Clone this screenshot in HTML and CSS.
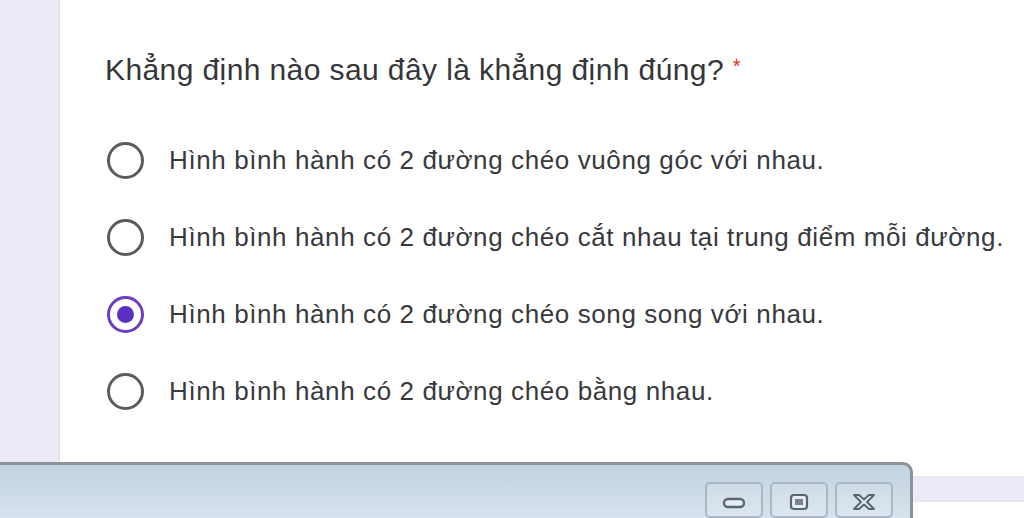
FILE: index.html
```html
<!DOCTYPE html>
<html lang="vi">
<head>
    <meta charset="UTF-8">
    <meta name="viewport" content="width=device-width, initial-scale=1.0">
    <title>Câu hỏi</title>
    <link rel="stylesheet" href="styles.css">
</head>
<body>
    <main class="formulario">
        <section class="cardPergunta">
            <h1 class="pergunta">Khẳng định nào sau đây là khẳng định đúng? <span class="obrigatorio">*</span></h1>

            <div class="opcoes">
                <label class="opcao">
                    <span class="radio"></span>
                    <span class="textoOpcao">Hình bình hành có 2 đường chéo vuông góc với nhau.</span>
                </label>
                <label class="opcao">
                    <span class="radio"></span>
                    <span class="textoOpcao">Hình bình hành có 2 đường chéo cắt nhau tại trung điểm mỗi đường.</span>
                </label>
                <label class="opcao">
                    <span class="radio marcado"></span>
                    <span class="textoOpcao">Hình bình hành có 2 đường chéo song song với nhau.</span>
                </label>
                <label class="opcao">
                    <span class="radio"></span>
                    <span class="textoOpcao">Hình bình hành có 2 đường chéo bằng nhau.</span>
                </label>
            </div>
        </section>

        <section class="cardPergunta proximo"></section>
    </main>

    <div class="janela">
        <div class="botoesJanela">
            <span class="botaoJanela">
                <svg width="26" height="14" viewBox="0 0 26 14"><rect x="3" y="4" width="20" height="8" rx="4" fill="#e6edf3" stroke="#5d6670" stroke-width="2.4"/></svg>
            </span>
            <span class="botaoJanela">
                <svg width="20" height="18" viewBox="0 0 20 18"><rect x="2" y="2" width="16" height="14" rx="3" fill="#e6edf3" stroke="#5d6670" stroke-width="2.2"/><rect x="6" y="6" width="8" height="6" fill="#7b838c"/></svg>
            </span>
            <span class="botaoJanela">
                <svg width="26" height="20" viewBox="0 0 26 20"><path d="M3 3 L8 3 L13 7.5 L18 3 L23 3 L16 10 L23 17 L18 17 L13 12.5 L8 17 L3 17 L10 10 Z" fill="#e6edf3" stroke="#5d6670" stroke-width="2" stroke-linejoin="round"/></svg>
            </span>
        </div>
    </div>
</body>
</html>
```

FILE: styles.css
```css
* {
    margin: 0;
    padding: 0;
    box-sizing: border-box;
}

html, body {
    overflow: hidden;
}

body {
    background: #ede9f6;
    font-family: "Liberation Sans", Arial, sans-serif;
    height: 100vh;
    position: relative;
}

.formulario {
    display: flex;
    flex-direction: column;
    gap: 26px;
    margin-top: -14px;
    margin-left: 60px;
}

.cardPergunta {
    background: #ffffff;
    border-radius: 12px 0 0 12px;
    height: 490px;
    padding: 61px 0 0 45px;
    box-shadow: -1px 0 2px #00000014;
}

.cardPergunta.proximo {
    height: 14px;
    border-radius: 12px 0 0 0;
}

.pergunta {
    font-size: 30px;
    font-weight: 400;
    color: #35363a;
    letter-spacing: 0.4px;
    line-height: 38px;
}

.obrigatorio {
    color: #d93025;
    font-size: 20px;
    vertical-align: 7px;
}

.opcoes {
    display: flex;
    flex-direction: column;
    gap: 41px;
    margin-top: 53px;
}

.opcao {
    display: flex;
    align-items: center;
    gap: 25px;
    height: 36px;
}

.radio {
    width: 37px;
    height: 37px;
    margin-left: 2px;
    border: 3.5px solid #5a5c60;
    border-radius: 50%;
    display: flex;
    align-items: center;
    justify-content: center;
    flex-shrink: 0;
}

.radio.marcado {
    border-color: #6b3fc0;
}

.radio.marcado::after {
    content: "";
    width: 17px;
    height: 17px;
    border-radius: 50%;
    background: #5b2fc4;
}

.textoOpcao {
    font-size: 26px;
    letter-spacing: 0.6px;
    color: #38393d;
    white-space: nowrap;
}

.janela {
    position: absolute;
    left: 0;
    top: 462px;
    width: 913px;
    height: 56px;
    background: linear-gradient(to bottom, #c2d3df, #d7e3ee);
    border-top: 3px solid #8e9399;
    border-right: 3px solid #8e9399;
    border-top-right-radius: 10px;
    display: flex;
    justify-content: flex-end;
    padding: 17px 17px 0 0;
}

.botoesJanela {
    display: flex;
    gap: 7px;
    height: 36px;
}

.botaoJanela {
    width: 58px;
    height: 36px;
    border: 2px solid #a8b8c6;
    border-radius: 5px;
    background: linear-gradient(to bottom, #cfdce7, #dbe6ef);
    display: flex;
    align-items: center;
    justify-content: center;
    padding-top: 4px;
}
```
